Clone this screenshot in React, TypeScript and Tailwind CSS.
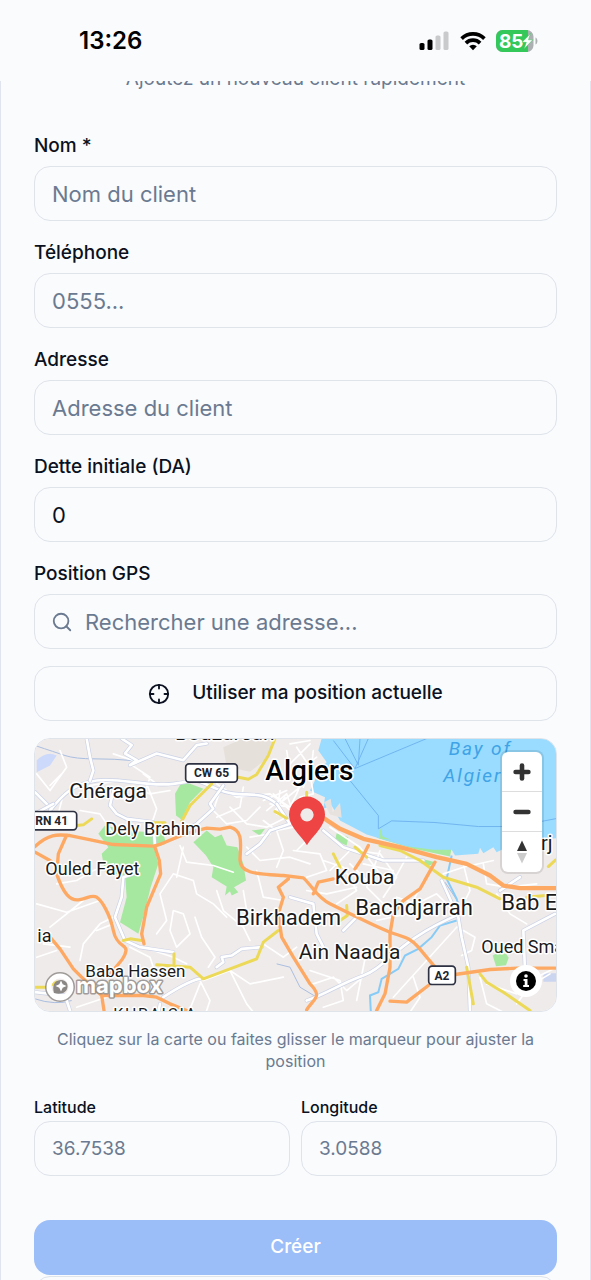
import { useState } from 'react'
import type { InputHTMLAttributes } from 'react'
import { Minus, Plus, Search } from 'lucide-react'
import clsx from 'clsx'

const inputClass =
  'w-full h-[55px] rounded-2xl border border-[#dfe3ea] bg-transparent px-[17px] text-[#0b1120] outline-none placeholder:text-[#6b7a90] focus-visible:border-blue-300'

interface FieldProps extends InputHTMLAttributes<HTMLInputElement> {
  id: string
  label: string
}

function Field({ id, label, ...props }: FieldProps) {
  return (
    <div className="flex flex-col gap-2.5">
      <label htmlFor={id} className="text-[19px] leading-5 font-medium">
        {label}
      </label>
      <input id={id} className={clsx(inputClass, 'text-[22px]')} {...props} />
    </div>
  )
}

/** Same as Field, in the tighter size used for the coordinate pair. */
function CoordField({ id, label, ...props }: FieldProps) {
  return (
    <div className="flex min-w-0 flex-col gap-1">
      <label htmlFor={id} className="text-[16px] leading-5 font-medium">
        {label}
      </label>
      <input id={id} className={clsx(inputClass, 'text-[19px]')} {...props} />
    </div>
  )
}

function StatusBar() {
  return (
    <header className="flex h-[81px] shrink-0 items-center justify-between pr-[52px] pl-[79px] text-black">
      <time className="text-[24px] leading-8 font-semibold">13:26</time>
      <div className="flex items-center gap-[10px]">
        <svg viewBox="0 0 31 20" className="h-5 w-[31px]" aria-label="Signal">
          <rect x="0.5" y="12" width="5" height="7" rx="1.6" />
          <rect x="8.5" y="8.5" width="5" height="10.5" rx="1.6" />
          <rect x="16.5" y="4.5" width="5" height="14.5" rx="1.6" fill="#c9cacb" />
          <rect x="24.5" y="0.5" width="5" height="18.5" rx="1.6" fill="#c9cacb" />
        </svg>
        <svg viewBox="0 0 26 20" className="h-5 w-[26px]" fill="none" stroke="#000" strokeWidth="3.7" aria-label="Wi-Fi">
          <path d="M1.6 7.6a16.2 16.2 0 0 1 22.8 0" />
          <path d="M5.9 12.1a10.1 10.1 0 0 1 14.2 0" />
          <path d="M13 19.2l-3.8-3.900a5.5 5.5 0 0 1 7.6 0z" fill="#000" stroke="none" />
        </svg>
        <svg viewBox="0 0 43 22" className="h-[22px] w-[43px]" aria-label="Batterie">
          <clipPath id="battery">
            <rect width="37.5" height="22" rx="6.5" />
          </clipPath>
          <g clipPath="url(#battery)">
            <rect width="38" height="22" fill="#adb0b2" />
            <rect width="32" height="22" fill="#34c759" />
          </g>
          <path d="M39.5 7.5c2.6 1 2.6 6 0 7z" fill="#adb0b2" />
          <text x="3" y="17.5" fill="#fff" className="font-['Inter'] text-[19px] font-bold">
            85
          </text>
          <path d="M34.5 3.5l-8.5 8.800h4.300l-2.300 6.700 8.800-9.200h-4.300z" fill="#fff" stroke="#34c759" strokeWidth="0.5" />
        </svg>
      </div>
    </header>
  )
}

const PARKS = [
  'M435 190L455 155 480 160 520 175 480 215 455 268 438 255z',
  'M205 310L225 285 290 300 400 308 408 340 372 352 385 400 362 470 345 540 325 610 270 575 290 500 285 435 225 425 215 370 235 350z',
  'M490 335L530 300 555 320 575 312 590 345 622 350 640 400 648 450 612 470 625 485 605 495 600 482 585 495 590 468 545 440 550 410 528 375z',
  'M665 300L705 295 690 315z',
  'M920 308L955 320 950 345 915 330z',
  'M1050 290L1060 318 1150 345 1265 352 1260 378 1150 355 1040 322z',
  'M1175 385L1215 395 1200 405 1172 398z',
  'M1388 675l15-8 25 3 8 12-8 22-30 3z',
]

const STREETS = [
  'M20 130L60 180 110 110 90 60M180 165L270 150 380 165M60 165l35-35M300 100l60 40-20 60M340 130l40 30',
  'M290 150l60 10 30 75-20 60M100 190l-20 80 50 30M150 240l60 10 40 60M250 70l60 20M310 170l50 20 60-10',
  'M20 520l90 25 100-35M60 590l100-80M80 460l60-10 50-30 60-20M40 640l80 10M20 680l60-20',
  'M250 560l-40 20-50 60-10 50M200 600l50-20M140 830l90-30 100-20M300 650l60 30 20 60M340 650l90 30 40 20',
  'M450 345l20 50 80 10 60 20M430 430l-40 60 20 80-30 40M430 430l60 20 10 40 50 30 40 40M460 350l-20 90',
  'M495 560l20 60 40 60-20 30M560 480l20 60 60 50 20 40M430 540l30 10 20 60-40 40-20-50zM640 480l10 60 60 40 30-10',
  'M510 750l30 60-20 60M520 750l80-30 60 40 100-20M600 720l50 100 40 50M700 640l60 40 40-30M470 860l40-100',
  'M560 160l60 40 100-10 60 40M570 180l-20 60 40 40 60-10 40-40M600 230l50 50 60 10 60-30M640 170l-10 60-70 30',
  'M650 350l40 40 90-10 60 20M740 300l20 60-20 50M680 420l20 80 60 10M790 360l80 10 20 50-60 20',
  'M900 420l60-60M960 400l60 60M980 360l70 10 50 70-40 60M1000 400l90 20M1050 360l-40 110 60 60M1130 380l-50 90',
  'M880 390l60 20 40 70-60 40M830 480l60 10 90-20M1100 500l60 20 60-30 40 40M1180 450l-50 100-90 20',
  'M850 760l60-20 40 40 60-50M840 720l90 30 10 60-60 20M1010 660l-30 150M1150 740l20 60-40 60M1280 590L1090 800',
  'M1300 400l20 80-30 60M1360 400l10 60 60 10 90-10M1400 490l40 60 50 30M1300 600l35 20-10 40-30 15',
  'M1370 760l90 30 100-60M1350 740l20 80 60 30M1460 820l60-80 60-30M1240 430l60-20 90-20',
  'M800 50l40 60-20 60M840 40l-60 60M800 190l40-100M850 60l-10 90M760 210l50-40M720 220l60 10 20-40',
  'M700 210l70-30M735 240l30-40M780 40l60-10M820 110l40-30M770 60l10 60M900 290l90 60 60 80M860 300l-60 60',
  'M730 190l50 50M710 240l60-50 20 60M750 180l-10 70 50 20M840 130l10 60-40 10M700 270l40 30 50-10M660 320l60-10',
]

const ARTERIALS = [
  'M15 185L65 235M60 240C100 190 130 160 200 150S350 170 430 160 480 140 560 175 680 170 740 220',
  'M170 24L180 80 190 120 180 150M275 24l30 20-20 25 35 20-20 15 80-35 80 20 40-45 30-5',
  'M250 180L240 225 260 250 290 265 370 275 375 345M580 165L540 220 550 235 500 280 450 305',
  'M310 430L280 440 275 500 255 560 285 630 330 650 430 665',
  'M400 800C460 760 500 745 510 745M560 710l20-15-5-15 30-5 30-20 60-5M380 870l10-50',
  'M740 220l40 60-60 20-30 40-40 30M880 300l60 50 120 40 120 0M780 500l70 20 10 90 20 40',
  'M830 810C890 790 930 760 1000 735S1100 630 1290 550M1235 450l50 110 10 60 20 90 5 130M940 600l80-80',
  'M1575 550L1480 600 1485 720M1410 480l60-40M15 785l90 10 20 60M15 250l55-30',
]

const MINOR_HIGHWAYS = [
  'M735 24L715 75 680 132 655 146 625 140M545 160L510 195 480 225 455 272M140 285l20-2 25-18M360 277h45M735 243l35 20',
  'M745 600L700 635 680 685 600 715 520 745 480 710 380 703M432 670v30M280 630l20-5 40 6M15 770h35l30-15',
  'M1050 345L1110 360 1170 390 1240 440 1340 470 1410 505M910 370l20 40M975 350l35 30M1555 408l22-20',
  'M1310 710l20 110M1350 730L1370 755 1420 785 1500 840M950 525l2 30-22 15M1490 500l90-8M830 185v20',
]

const HIGHWAYS = [
  'M15 348C60 305 90 313 120 315L200 332 250 342 370 347C410 340 430 315 530 293L570 296 600 290C640 300 632 340 630 385S680 430 760 435L820 442C850 470 860 500 900 520S1040 590 1080 605 1140 620 1165 650L1215 710',
  'M850 490L865 455 910 445M108 318L85 370 80 430C100 490 120 510 145 508S185 490 200 500 240 550 250 600 290 640 288 660 270 695 240 730M375 350L388 390 392 430 350 530 335 610 342 640',
  'M15 365L60 390 85 410M60 620L90 655 130 715 160 745 215 795 222 840M215 795H340L380 800 420 820 470 840',
  'M775 445L745 470 760 500 745 550 755 620 790 680 840 760C880 800 850 805 830 838',
  'M1015 345L995 385 975 415M1215 395L1170 475 1120 510 1090 550 1080 610V710L1065 790 1040 840M1195 765L1130 815 1080 812',
  'M1275 732L1380 717 1460 713H1580',
]

const COAST_HIGHWAY = 'M880 262L930 295 1000 325 1110 350 1220 380 1310 400 1380 435 1420 465 1470 473H1580'

const PLACES = [
  { name: 'Bouzaréah', x: 435, y: 27, size: 'text-[63px]' },
  { name: 'Chéraga', x: 118, y: 203, size: 'text-[63px]' },
  { name: 'Dely Brahim', x: 226, y: 312, size: 'text-[54px]' },
  { name: 'Ouled Fayet', x: 46, y: 433, size: 'text-[54px]' },
  { name: 'Kouba', x: 914, y: 460, size: 'text-[63px]' },
  { name: 'Birkhadem', x: 618, y: 583, size: 'text-[66px]' },
  { name: 'Bachdjarrah', x: 976, y: 553, size: 'text-[66px]' },
  { name: 'Ain Naadja', x: 806, y: 685, size: 'text-[63px]' },
  { name: 'Bab Ezzouar', x: 1414, y: 538, size: 'text-[66px]' },
  { name: 'Oued Smar', x: 1354, y: 667, size: 'text-[54px]' },
  { name: 'Baba Hassen', x: 166, y: 738, size: 'text-[51px]' },
  { name: 'ia', x: 22, y: 635, size: 'text-[54px]' },
  { name: 'rj', x: 1533, y: 357, size: 'text-[60px]' },
]

const SHIELDS = [
  { name: 'CW 65', x: 467, y: 100, width: 155 },
  { name: 'RN 41', x: -10, y: 243, width: 150 },
  { name: 'A2', x: 1196, y: 707, width: 80 },
]

function MapCanvas() {
  return (
    <svg viewBox="15 24 1563 819" preserveAspectRatio="xMidYMid slice" className="h-full w-full font-['Roboto']" role="img" aria-label="Carte d'Alger">
      <rect x="0" y="0" width="1600" height="870" fill="#efebea" />
      <path d="M580 50l60-26 90 0-20 60-50 40-70-15z" fill="#e6e0da" />
      <path d="M20 90q30-30 60-15l-20 30-40 20z" fill="#ccd9fb" />
      {PARKS.map((d) => (
        <path key={d} d={d} fill="#a6e8a0" />
      ))}
      <path
        d="M875 24L865 60 890 95 860 125 855 150 840 180 885 200 880 235 905 225 930 270 1010 312 1050 324 1130 347 1210 358 1265 358 1275 375 1345 370 1350 352 1360 368 1390 350 1400 365 1440 345 1500 330 1590 322V0H875z"
        fill="#99dcff"
      />
      <path d="M882 215l20-10 6 40 22-28 5 45-35-10z" fill="#e8e2df" />
      <path d="M1050 292l8 26 25 10-35-4z" fill="#a6e8a0" />
      <g fill="none" stroke="#72b5f0" strokeWidth="3">
        <path d="M945 24l40 80 5-80M1015 24l-40 90 220-92M910 30l65 85M960 150l85 105v40l40-24 130 5 130 12h110l130-25" />
        <path d="M15 45q60 20 90 30t90 10 110 5M15 805q60 20 110 5M1245 455l40 60M740 700l40 10 30 60 50 30" stroke="#a9bee0" />
      </g>
      <g fill="none" stroke="#87cbf7" strokeWidth="6">
        <path d="M1280 570l-50 15-25 35-40 35-40 20-20 40-50 30-10 40-25 10 3 60M1265 375l-15 70 30 60 10 40" />
      </g>
      <path d="M1540 728h40v26h-40z" fill="#ccd5f0" />
      <g fill="none" stroke="#fff" strokeLinejoin="round" strokeLinecap="round">
        <g strokeWidth="5">
          {STREETS.map((d) => (
            <path key={d} d={d} />
          ))}
        </g>
        {ARTERIALS.map((d) => (
          <g key={d}>
            <path d={d} stroke="#cbd2e6" strokeWidth="12" />
            <path d={d} strokeWidth="8" />
          </g>
        ))}
        <g stroke="#ecd958" strokeWidth="9">
          {MINOR_HIGHWAYS.map((d) => (
            <path key={d} d={d} />
          ))}
        </g>
        <g stroke="#fda963" strokeWidth="10">
          {HIGHWAYS.map((d) => (
            <path key={d} d={d} />
          ))}
          <path d={COAST_HIGHWAY} strokeWidth="13" />
        </g>
      </g>

      <g fill="#3fa3e6" className="text-[57px] tracking-widest italic">
        <text x="1256" y="72">Bay of</text>
        <text x="1240" y="154">Algiers</text>
      </g>
      <g fill="#1b1b1b" stroke="#fff" strokeWidth="9" strokeLinejoin="round" className="[paint-order:stroke]">
        {PLACES.map((p) => (
          <text key={p.name} x={p.x} y={p.y} className={p.size}>
            {p.name}
          </text>
        ))}
        <text x="250" y="867" className="text-[48px] tracking-widest">KHRAICIA</text>
        <text x="706" y="147" fill="#000" className="text-[84px] font-medium">Algiers</text>
      </g>

      {SHIELDS.map((s) => (
        <g key={s.name}>
          <rect x={s.x} y={s.y} width={s.width} height="55" rx="10" fill="#fff" stroke="#2d3142" strokeWidth="5" />
          <text x={s.x + s.width / 2} y={s.y + 40} textAnchor="middle" fill="#22252e" className="text-[36px] font-bold">
            {s.name}
          </text>
        </g>
      ))}

      <path
        fillRule="evenodd"
        d="M831 344C815 316 777 290 777 252a54 54 0 0 1 108 0c0 38-38 64-54 92zM831 233a20 20 0 1 0 0 40 20 20 0 0 0 0-40z"
        fill="#ef4444"
      />
    </svg>
  )
}

function MapboxLogo() {
  return (
    <a href="#mapbox" aria-label="Mapbox" className="absolute bottom-[8px] left-[9px] block">
      <svg viewBox="0 0 122 32" className="h-8 w-[122px]">
        <g stroke="#8b8785" strokeOpacity="0.8">
          <circle cx="16" cy="16" r="13" fill="none" strokeWidth="4" />
          <circle cx="16" cy="16" r="11" fill="none" stroke="#fff" strokeOpacity="1" strokeWidth="5" />
          <path d="M10 22c-2-7 0-12.500 6.500-13 4.500 0 7 2.500 7 6.200 0 6.300-6.500 8.800-13.500 6.800z" fill="#8b8785" stroke="none" />
          <path d="M17 9.500l1.700 3.800 3.800 1.700-3.800 1.700L17 20.500l-1.700-3.800-3.800-1.700 3.800-1.700z" fill="#fff" stroke="none" />
          <text x="32" y="22" fill="#fff" strokeWidth="3" strokeLinejoin="round" className="font-['Inter'] text-[22px] font-bold [paint-order:stroke]">
            mapbox
          </text>
        </g>
      </svg>
    </a>
  )
}

function MapPicker() {
  return (
    <div className="relative mt-[17px] aspect-[521/273] overflow-hidden rounded-2xl border border-[#dfe3ea]">
      <MapCanvas />
      <div className="absolute top-[13px] right-[14px] flex w-10 flex-col divide-y divide-[#dddddd] rounded-md bg-white shadow-[0_0_0_2px_rgba(0,0,0,0.1)]">
        <button type="button" aria-label="Zoom avant" className="flex h-10 items-center justify-center text-[#333333]">
          <Plus size={22} strokeWidth={5} />
        </button>
        <button type="button" aria-label="Zoom arrière" className="flex h-10 items-center justify-center text-[#333333]">
          <Minus size={22} strokeWidth={5} />
        </button>
        <button type="button" aria-label="Orienter vers le nord" className="flex h-10 items-center justify-center">
          <svg viewBox="0 0 12 24" className="h-6 w-3">
            <path d="M6 0.500l5 10.500H1z" fill="#333" />
            <path d="M6 23.500L1 13h10z" fill="#ccc" />
          </svg>
        </button>
      </div>
      <MapboxLogo />
      <button
        type="button"
        aria-label="Attribution"
        className="absolute right-[14px] bottom-[14px] flex size-8 items-center justify-center rounded-full bg-white"
      >
        <svg viewBox="0 0 20 20" className="size-5">
          <circle cx="10" cy="10" r="10" />
          <circle cx="10" cy="5" r="1.8" fill="#fff" />
          <path d="M7.500 8h4v6H13v2H7.200v-2h1.500v-4H7.500z" fill="#fff" />
        </svg>
      </button>
    </div>
  )
}

export default function App() {
  const [debt, setDebt] = useState('0')

  return (
    <div className="flex h-screen flex-col overflow-hidden bg-[#f9fbfd] font-['Inter',sans-serif] text-[#0b1120]">
      <StatusBar />
      <main className="min-h-0 flex-1 overflow-hidden border-x border-[#dfe4ee] px-[33px]">
        <p className="-mt-4 mb-[43px] text-center text-[19px] leading-7 text-[#6b7a90]">
          Ajoutez un nouveau client rapidement
        </p>

        <form className="flex flex-col" onSubmit={(e) => e.preventDefault()}>
          <div className="flex flex-col gap-[22px]">
            <Field id="name" label="Nom *" placeholder="Nom du client" required />
            <Field id="phone" label="Téléphone" type="tel" placeholder="0555..." />
            <Field id="address" label="Adresse" placeholder="Adresse du client" />
            <Field
              id="debt"
              label="Dette initiale (DA)"
              inputMode="decimal"
              value={debt}
              onChange={(e) => setDebt(e.target.value)}
            />
            <div className="flex flex-col gap-2.5">
              <label htmlFor="gps" className="text-[19px] leading-5 font-medium">
                Position GPS
              </label>
              <div className="flex h-[55px] items-center gap-3 rounded-2xl border border-[#dfe3ea] px-4 focus-within:border-blue-300">
                <Search size={22} className="shrink-0 text-[#6b7a90]" />
                <input
                  id="gps"
                  type="text"
                  placeholder="Rechercher une adresse..."
                  className="h-full min-w-0 flex-1 bg-transparent text-[22px] outline-none placeholder:text-[#6b7a90]"
                />
              </div>
            </div>
          </div>

          <button
            type="button"
            className="mt-[17px] flex h-[55px] items-center justify-center gap-[22px] rounded-2xl border border-[#dfe3ea] text-[19px] font-medium"
          >
            <svg viewBox="0 0 24 24" className="size-[22px]" fill="none" stroke="currentColor" strokeWidth="2" strokeLinecap="round">
              <circle cx="12" cy="12" r="10" />
              <path d="M22 12h-4M6 12H2M12 6V2M12 22v-4" />
            </svg>
            Utiliser ma position actuelle
          </button>

          <MapPicker />

          <p className="mt-4 text-center text-[16px] leading-[22px] text-[#6b7a90]">
            Cliquez sur la carte ou faites glisser le marqueur pour ajuster la position
          </p>

          <div className="mt-[25px] grid grid-cols-2 gap-[11px]">
            <CoordField id="lat" label="Latitude" placeholder="36.7538" />
            <CoordField id="lng" label="Longitude" placeholder="3.0588" />
          </div>

          <button type="submit" disabled className="mt-11 h-[55px] rounded-2xl bg-[#9bbdf8] text-[19px] font-medium text-white">
            Créer
          </button>
          <button type="button" className="mt-px h-[55px] rounded-2xl border border-[#dfe3ea] text-[19px] font-medium">
            Annuler
          </button>
        </form>
      </main>
    </div>
  )
}
